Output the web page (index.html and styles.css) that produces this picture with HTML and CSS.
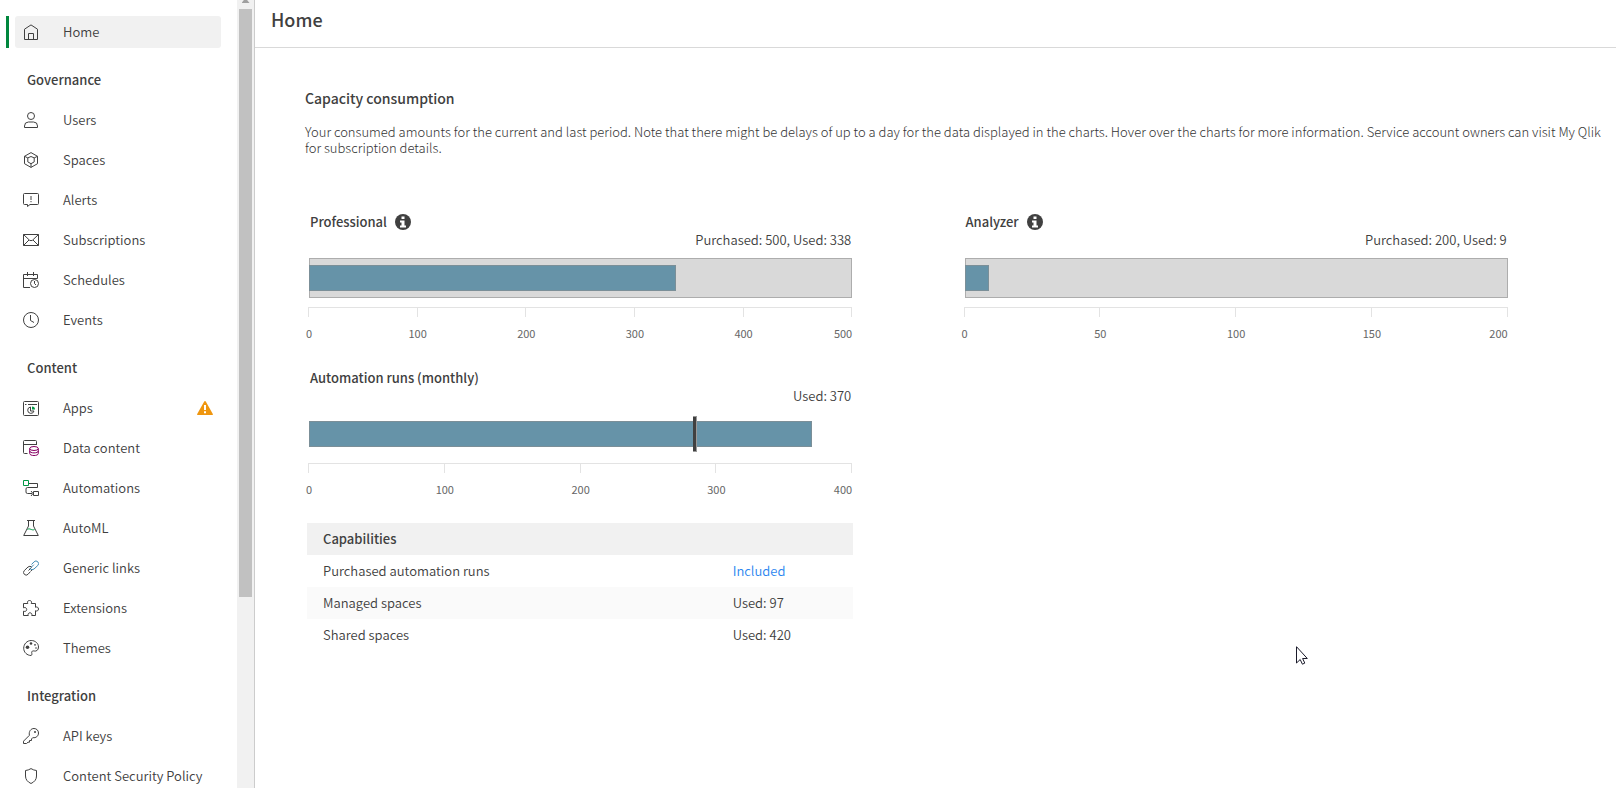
FILE: index.html
```html
<!DOCTYPE html>
<html lang="en">
<head>
<meta charset="utf-8">
<title>Home</title>
<meta name="viewport" content="width=device-width, initial-scale=1">
<link rel="stylesheet" href="styles.css">
</head>
<body>
<div class="app">
  <aside class="sidebar">
    <nav class="nav" aria-label="Management console">
      <a class="item active" href="#home"><svg class="icon" viewBox="0 0 16 16"><path d="M1.5 15.5V5.2L8 .9l6.500 4.300v10.300zM5.500 15.500v-6h5v6"/></svg>Home</a>

      <h2 class="group">Governance</h2>
      <a class="item" href="#users"><svg class="icon" viewBox="0 0 16 16"><circle cx="8" cy="4" r="3.500"/><path d="M1.500 15.500v-1.500a4 4 0 0 1 4-4h5a4 4 0 0 1 4 4v1.500z"/></svg>Users</a>
      <a class="item" href="#spaces"><svg class="icon" viewBox="0 0 16 16"><path d="M8 .6l6.500 3.700v7.400L8 15.400l-6.500-3.700V4.300zM8 4.500l3.200 1.400v4L8 11.700l-3.200-1.800v-4zM1.500 4.300L4.800 5.900M14.500 4.300L11.200 5.900M8 11.700v3.700"/></svg>Spaces</a>
      <a class="item" href="#alerts"><svg class="icon" viewBox="0 0 16 16"><path d="M1.500 1.500h13a1 1 0 0 1 1 1v9a1 1 0 0 1-1 1H7L4.500 14.500v-2h-3a1 1 0 0 1-1-1v-9a1 1 0 0 1 1-1zM8 4v4M8 9v1.200"/></svg>Alerts</a>
      <a class="item" href="#subscriptions"><svg class="icon" viewBox="0 0 16 16"><path d="M.5 2.500h15v11H.5zM.5 2.500L6.500 8.200q1.500 1 3 0l6-5.700M.5 13.500l5.500-5.500M15.500 13.500L10 8"/></svg>Subscriptions</a>
      <a class="item" href="#schedules"><svg class="icon" viewBox="0 0 16 16"><path d="M7 15.500H.5V2.500h14v4M.5 6.500h14M4.500 0v4M10.500 0v4"/><circle cx="11.500" cy="11.500" r="4"/><path d="M11.500 9v2.500l1.500 1.500"/></svg>Schedules</a>
      <a class="item" href="#events"><svg class="icon" viewBox="0 0 16 16"><circle cx="8" cy="8" r="7.500"/><path d="M7.500 3v5.500l3.500 2"/></svg>Events</a>

      <h2 class="group">Content</h2>
      <a class="item" href="#apps"><svg class="icon" viewBox="0 0 16 16"><rect x=".5" y="1.500" width="15" height="14" rx="1"/><path d="M2 4.500h1.500M5 4.500h9M7.500 7A3.200 3.200 0 1 0 11 11H7.500z"/><path class="fill-green" d="M9 6.500a3 3 0 0 1 3 3H9z"/></svg>Apps
        <svg class="warning" viewBox="0 0 16 14" role="img" aria-label="Warning"><path class="warning-shape" d="M7.200.5q.8-1 1.600 0l7 12.500q.3 1-.8 1H1q-1.100 0-.8-1z"/><path class="warning-mark" d="M8 4v5M8 10.200v2"/></svg></a>
      <a class="item" href="#data"><svg class="icon" viewBox="0 0 16 16"><path d="M4.500 13.500h-3a1 1 0 0 1-1-1v-11a1 1 0 0 1 1-1h11a1 1 0 0 1 1 1V5M.5 4.500h13"/><g class="purple"><ellipse cx="11" cy="8.500" rx="4.300" ry="2"/><path d="M6.700 8.500v5c0 2.700 8.600 2.700 8.600 0v-5M6.700 11c0 2.500 8.600 2.500 8.600 0"/></g></svg>Data content</a>
      <a class="item" href="#automations"><svg class="icon" viewBox="0 0 16 16"><path class="green" d="M.5.500h5v5h-5z"/><path d="M6 3.500h8.500v4h-10q-1.500 0-1.500 1.500v3q0 1.500 1.500 1.500H9M8 11l2 2.500L8 16M10.500 11.500h5v4h-5z"/></svg>Automations</a>
      <a class="item" href="#automl"><svg class="icon" viewBox="0 0 16 16"><path d="M4 .5h8M5.500.5v5.500L.7 15.500h14.600L10.500 6V.500"/><path class="green" d="M4.500 9.500c2-2 4.500 1.500 7 0"/></svg>AutoML</a>
      <a class="item" href="#links"><svg class="icon" viewBox="0 0 16 16"><path d="M5.500 10.500l3-3M7.500 11.500L5 14.300a2.600 2.600 0 0 1-3.700-3.700L5 7q2-1.500 3.700 0M8 11l1.200-1.400"/><path class="blue" d="M8.500 4.500l2.600-2.700a2.600 2.600 0 0 1 3.700 3.700L11 9q-2 1.500-3.700 0l-.5-1M8 7.500l2.800-2.800"/></svg>Generic links</a>
      <a class="item" href="#extensions"><svg class="icon" viewBox="0 0 16 16"><path d="M.5 3.500h4.300C3.900 1.600 5 .5 6.500.5s2.700 1.100 1.700 3h4.300v3.800c1.600-.9 3 .2 3 1.700s-1.400 2.600-3 1.700v4.800H8.700c.8-1.700-.6-2.700-1.700-2.700s-2.500 1-1.700 2.700H.5v-4.300c2 .7 3.200-.3 3.200-1.700S2.500 7 .5 7.800z"/></svg>Extensions</a>
      <a class="item" href="#themes"><svg class="icon" viewBox="0 0 16 16"><path d="M8.200 15.500C4 15.500.7 12.300.7 8.200S4 .5 8.200.5s7.300 3 7.300 6.500c0 3.200-2.200 4.500-4.300 4-1.500-.4-2.800.3-2.500 1.700.2 1.100.5 2.300-.5 2.800z"/><circle class="dot" cx="4.500" cy="7.200" r="1.800"/><circle class="dot" cx="8" cy="3.500" r="1.300"/><circle class="dot" cx="12" cy="4.800" r=".9"/><circle class="dot" cx="13" cy="8" r=".8"/></svg>Themes</a>

      <h2 class="group">Integration</h2>
      <a class="item" href="#keys"><svg class="icon" viewBox="0 0 16 16"><path d="M6.400 7.300C5.600 3.500 7.800.5 11 .5c2.500 0 4.500 1.900 4.500 4.500 0 3.100-2.700 5.300-5.700 4.600L8.500 11v1.500H6.500v1.700H5L3.500 15.500H.5v-2.300z"/><circle class="dot" cx="12" cy="4" r="1"/></svg>API keys</a>
      <a class="item" href="#csp"><svg class="icon" viewBox="0 0 16 16"><path d="M8 .6q2.700 1.700 5.500 1.900v5.500q0 5-5.500 7.500Q2.500 13 2.500 8V2.500Q5.300 2.300 8 .6z"/></svg>Content Security Policy</a>
    </nav>
    <div class="scrollbar" aria-hidden="true">
      <div class="scroll-arrow"></div>
      <div class="scroll-thumb"></div>
    </div>
  </aside>

  <main class="main">
    <header class="header"><h1 class="title">Home</h1></header>
    <section class="content">
      <h2 class="section-title">Capacity consumption</h2>
      <p class="intro">Your consumed amounts for the current and last period. Note that there might be delays of up to a day for the data displayed in the charts. Hover over the charts for more information. Service account owners can visit My Qlik for subscription details.</p>

      <div class="grid">
        <div class="cell">
          <article class="chart">
            <h3 class="chart-title">Professional
              <button class="info" aria-label="About Professional"><svg viewBox="0 0 16 16"><circle cx="8" cy="8" r="8"/><path d="M6.500 2.500h3v2.500h-3zM5 6.500h4.500v5H11v2H5v-2h1.500v-3H5z"/></svg></button></h3>
            <p class="summary">Purchased: 500, Used: 338</p>
            <div class="bar bar-quota"><div class="fill" style="width:67.6%"></div></div>
            <div class="ticks"><i></i><i></i><i></i><i></i><i></i></div>
            <div class="labels"><span>0</span><span>100</span><span>200</span><span>300</span><span>400</span><span>500</span></div>
          </article>
        </div>
        <div class="cell">
          <article class="chart">
            <h3 class="chart-title">Analyzer
              <button class="info" aria-label="About Analyzer"><svg viewBox="0 0 16 16"><circle cx="8" cy="8" r="8"/><path d="M6.500 2.500h3v2.500h-3zM5 6.500h4.500v5H11v2H5v-2h1.500v-3H5z"/></svg></button></h3>
            <p class="summary">Purchased: 200, Used: 9</p>
            <div class="bar bar-quota"><div class="fill" style="width:4.6%"></div></div>
            <div class="ticks"><i></i><i></i><i></i><i></i></div>
            <div class="labels"><span>0</span><span>50</span><span>100</span><span>150</span><span>200</span></div>
          </article>
        </div>
        <div class="cell">
          <article class="chart">
            <h3 class="chart-title">Automation runs (monthly)</h3>
            <p class="summary">Used: 370</p>
            <div class="bar"><div class="fill" style="width:92.6%"></div><div class="marker" style="left:71%"></div></div>
            <div class="ticks"><i></i><i></i><i></i><i></i></div>
            <div class="labels"><span>0</span><span>100</span><span>200</span><span>300</span><span>400</span></div>
          </article>
          <table class="capabilities">
            <thead><tr><th colspan="2" scope="colgroup">Capabilities</th></tr></thead>
            <tbody>
              <tr><td>Purchased automation runs</td><td class="value included">Included</td></tr>
              <tr><td>Managed spaces</td><td class="value">Used: 97</td></tr>
              <tr><td>Shared spaces</td><td class="value">Used: 420</td></tr>
            </tbody>
          </table>
        </div>
      </div>
    </section>
  </main>
</div>
<svg class="pointer" viewBox="0 0 12 19" aria-hidden="true"><path d="M.5.700v16.300l3.700-3.500 2.200 4.700 2.400-1.100-2.200-4.600h4.700z"/></svg>
</body>
</html>
```
FILE: styles.css
```css
* {
  box-sizing: border-box;
}

body {
  margin: 0;
  background: #fff;
  color: #404040;
  font: 350 13px/16px "Noto Sans CJK SC", "Noto Sans", sans-serif;
}

h1, h2, h3, p {
  margin: 0;
  font-weight: 500;
}

p {
  font-weight: 350;
}

.app {
  display: flex;
  height: 100vh;
  overflow: hidden;
}

/* Sidebar */
.sidebar {
  flex: none;
  display: flex;
  width: 255px;
  border-right: 1px solid #ccc;
}

.nav {
  flex: 1;
  height: 100%;
  overflow: hidden;
  padding: 16px 16px 0 6px;
}

.item {
  display: flex;
  align-items: center;
  gap: 24px;
  height: 32px;
  margin: 0 0 8px 9px;
  padding: 0 8px;
  border-radius: 3px;
  color: #404040;
  text-decoration: none;
  white-space: nowrap;
}

.active {
  position: relative;
  background: #f1f1f1;
}

.active::before {
  content: "";
  position: absolute;
  top: 0;
  bottom: 0;
  left: -9px;
  width: 3px;
  background: #00873d;
}

.group {
  height: 48px;
  padding-left: 21px;
  font-size: 13px;
  line-height: 48px;
}

.icon {
  flex: none;
  width: 16px;
  height: 16px;
  fill: none;
  stroke: #404040;
}

.icon .green { stroke: #009845; }
.icon .blue { stroke: #3f8ab3; }
.icon .purple { stroke: #870064; }
.icon .fill-green { fill: #009845; stroke: none; }
.icon .dot { fill: #404040; stroke: none; }

.warning {
  width: 16px;
  height: 14px;
  margin-left: auto;
}

.warning-shape { fill: #ef960f; }
.warning-mark { stroke: #fff; stroke-width: 2; }

.scrollbar {
  display: flex;
  flex-direction: column;
  width: 17px;
  padding: 0 2px;
  background: #f1f1f1;
}

.scroll-arrow {
  align-self: center;
  height: 9px;
}

.scroll-arrow::before {
  content: "";
  display: block;
  width: 8px;
  height: 3px;
  background: #a0a0a0;
  clip-path: polygon(30% 0, 70% 0, 100% 100%, 0 100%);
}

.scroll-thumb {
  height: 74.6%;
  background: #c1c1c1;
}

/* Main area */
.main {
  flex: 1;
  min-width: 0;
}

.header {
  padding: 7px 16px 16px;
  border-bottom: 1px solid #d9d9d9;
}

.title {
  font-size: 18px;
  line-height: 24px;
}

.content {
  padding: 40px 0 0 50px;
}

.section-title {
  font-size: 14px;
  line-height: 20px;
}

.intro {
  margin-top: 16px;
  color: #333;
  font-weight: 300;
}

.grid {
  display: grid;
  grid-template-columns: 1fr 1fr;
  row-gap: 27px;
  margin-top: 56px;
}

.cell {
  width: 83.333%;
  margin-left: 2px;
}

.chart {
  padding: 0 1px 0 2px;
}

.chart-title {
  display: flex;
  align-items: center;
  gap: 8px;
  height: 20px;
  padding-left: 1px;
  font-size: 13px;
}

.info {
  height: 16px;
  padding: 0;
  border: 0;
  background: none;
}

.info svg {
  display: block;
  width: 16px;
  height: 16px;
  fill: #404040;
}

.info path {
  fill: #fff;
}

.summary {
  margin-right: 1px;
  text-align: right;
}

.bar {
  position: relative;
  height: 40px;
  margin-top: 10px;
  padding: 7px 0;
}

.bar-quota {
  background: #d9d9d9;
  box-shadow: inset 0 0 0 1px #adadad;
}

.fill {
  height: 26px;
  border: 1px solid #7b8f98;
  background: #6693a8;
}

.marker {
  position: absolute;
  top: 2px;
  bottom: 2px;
  width: 4px;
  margin-left: -2px;
  border: solid #999;
  border-width: 1px 1px 1px 0;
  background: #404040;
}

.ticks {
  display: flex;
  height: 10px;
  margin: 9px 0 0 -1px;
  border-top: 1px solid #e3e3e3;
}

.ticks i {
  flex: 1;
  border-left: 1px solid #e3e3e3;
}

.ticks i:last-child {
  border-right: 1px solid #e3e3e3;
}

/* Zero-width labels spread evenly, so each one centres on its tick */
.labels {
  display: flex;
  justify-content: space-between;
  margin-top: 8px;
  color: #666;
  font-size: 11px;
  font-weight: 400;
}

.labels span {
  display: flex;
  justify-content: center;
  width: 0;
}

.labels span:last-child {
  justify-content: flex-end;
}

/* Capabilities */
.capabilities {
  width: 100%;
  margin-top: 26px;
  border-collapse: collapse;
}

.capabilities th,
.capabilities td {
  height: 32px;
  padding: 0 16px;
  text-align: left;
}

.capabilities th {
  background: #f1f1f1;
  font-weight: 500;
}

.capabilities .value {
  width: 25%;
}

.capabilities .included {
  color: #2b86f0;
}

.capabilities tbody tr:nth-child(even) {
  background: #fafafa;
}

.pointer {
  position: fixed;
  right: 308px;
  top: 646px;
  width: 12px;
  height: 19px;
  fill: #fff;
  stroke: #1a1a2a;
}
```
